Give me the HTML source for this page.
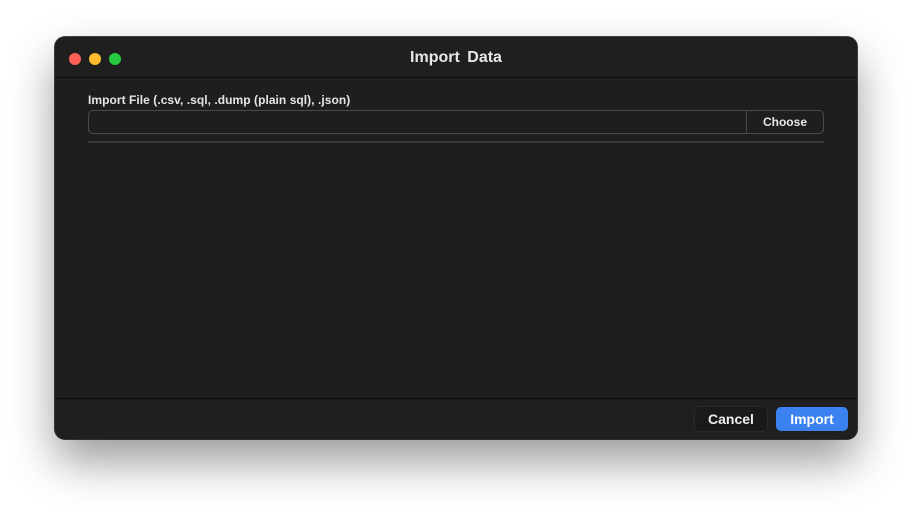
<!DOCTYPE html>
<html><head><meta charset="utf-8"><style>
body{margin:0;width:912px;height:512px;background:#fff;font-family:"Liberation Sans",sans-serif;position:relative;overflow:hidden}
.win{position:absolute;left:55px;top:37px;width:802px;height:402px;background:#1e1e1e;border-radius:10px;box-shadow:0 22px 45px rgba(0,0,0,.4),0 0 0 1px #444;overflow:hidden}
.tb{position:absolute;left:0;top:0;right:0;height:40px;border-bottom:1px solid #0c0c0c;background:#1f1f1f}
.dot{position:absolute;top:16px;width:12px;height:12px;border-radius:50%}
.title{position:absolute;left:0;right:0;top:12px;text-align:center;color:#e8e8e8;font-weight:bold;font-size:16px;word-spacing:3px}
.lbl{position:absolute;left:33px;top:56px;color:#e6e6e6;font-size:12px;font-weight:bold;letter-spacing:0.05px}
.field{position:absolute;left:33px;top:73px;width:734px;height:22px;border:1px solid #4a4a4a;border-radius:5px;background:#1e1e1e}
.choose{position:absolute;right:0;top:0;width:76px;height:22px;border-left:1px solid #4a4a4a;color:#e8e8e8;font-size:12px;font-weight:bold;text-align:center;line-height:22px}
.sep{position:absolute;left:33px;top:104px;width:736px;height:2px;background:#3a3a3a}
.foot{position:absolute;left:0;right:0;top:361px;height:41px;border-top:1px solid #0c0c0c;background:#1f1f1f}
.btn{position:absolute;top:8px;height:24px;border-radius:5px;font-size:14px;font-weight:bold;color:#eee;text-align:center;line-height:24px}
</style></head><body>
<div class="win">
<div class="tb">
<div class="dot" style="left:14px;background:#fe5f57"></div>
<div class="dot" style="left:34px;background:#febc2e"></div>
<div class="dot" style="left:54px;background:#28c840"></div>
<div class="title">Import Data</div>
</div>
<div class="lbl">Import File (.csv, .sql, .dump (plain sql), .json)</div>
<div class="field"><div class="choose">Choose</div></div>
<div class="sep"></div>
<div class="foot">
<div class="btn" style="left:639px;width:72px;background:#1a1a1a;border:1px solid #2a2a2a;top:7px">Cancel</div>
<div class="btn" style="left:721px;width:72px;background:#3b82f0;color:#fff">Import</div>
</div>
</div>
</body></html>
